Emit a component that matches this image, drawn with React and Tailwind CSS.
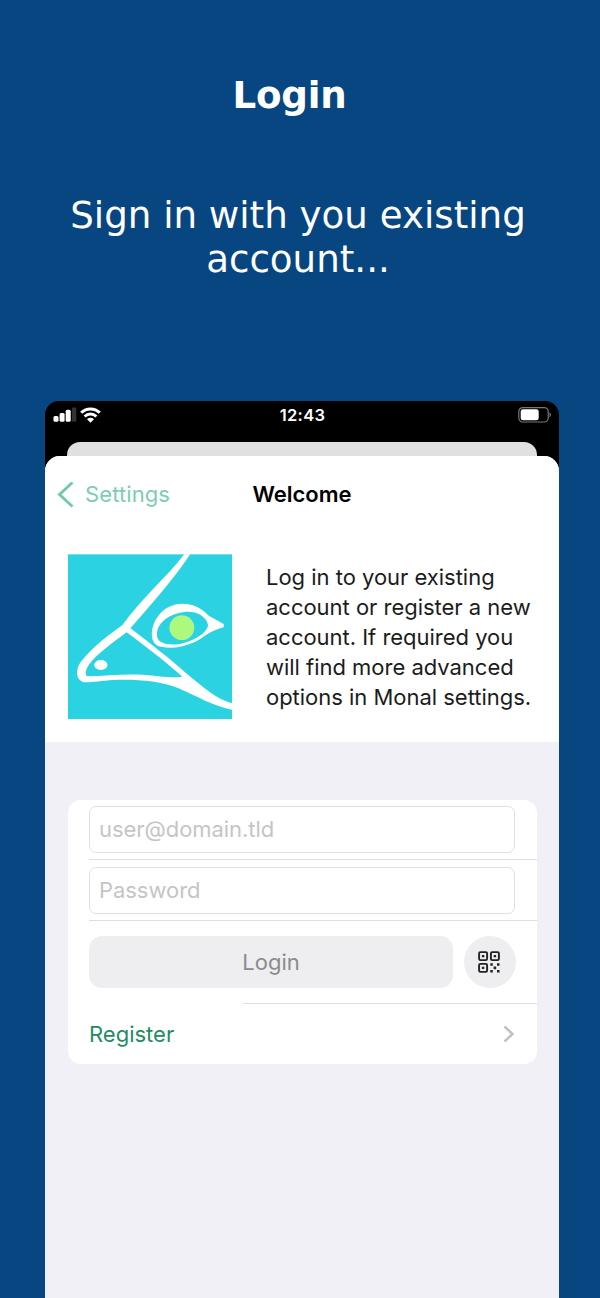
function BirdLogo() {
  return (
    <svg className="block h-[165px] w-[164px] shrink-0" viewBox="24 27 494 495" preserveAspectRatio="none">
      <rect x="24" y="28" width="494" height="494" fill="#2bd2e2" />
      <path
        fill="#fff"
        fillRule="evenodd"
        d="M374 28H392C350 92 290 162 212 250C260 286 330 340 380 385C430 426 470 462 518 475V494C460 484 410 452 357 430C300 406 220 402 160 405C125 407 92 413 72 412C46 405 46 372 64 349C103 300 148 270 188 240C246 160 320 98 374 28ZM200 262C164 290 109 328 88 358C77 374 74 388 82 394C140 392 190 386 250 389C300 393 335 400 368 395C330 360 250 298 200 262Z"
      />
      <ellipse cx="123" cy="360" rx="20" ry="15" fill="#fff" />
      <path
        fill="#fff"
        fillRule="evenodd"
        d="M277 275C274 235 300 190 350 178C395 171 425 188 448 212L493 237V247C450 258 432 278 408 290C370 307 330 313 297 304C285 298 278 288 277 275ZM292 264C288 296 325 302 360 297C402 289 443 265 446 240C439 211 408 198 374 201C330 207 296 230 292 264Z"
      />
      <ellipse cx="367" cy="248" rx="37.500" ry="37" fill="#adf97d" />
    </svg>
  );
}

function SignalIcon() {
  return (
    <svg className="h-[15px] w-[24px]" viewBox="0 0 24 15">
      <rect x="0.500" y="9" width="5" height="5.700" rx="1.500" fill="#fff" />
      <rect x="6.600" y="6" width="5" height="8.700" rx="1.500" fill="#fff" />
      <rect x="12.700" y="2.700" width="5" height="12" rx="1.500" fill="#fff" />
      <rect x="19" y="0.500" width="4.300" height="14.200" rx="1.300" fill="#333" />
    </svg>
  );
}

function WifiIcon() {
  return (
    <svg className="ml-[3px] h-[16px] w-[21px]" viewBox="0 0 21 16" fill="none" stroke="#fff" strokeWidth="3">
      <path d="M1.200 5.700C6.500 0.600 14.500 0.600 19.800 5.700" />
      <path d="M4.600 9.500C8 6.300 13 6.300 16.400 9.500" />
      <path d="M7 12.200Q10.500 9.500 14 12.200L10.500 15.700Z" fill="#fff" stroke="none" />
    </svg>
  );
}

function BatteryIcon() {
  return (
    <svg className="h-[16px] w-[34px]" viewBox="0 0 34 16">
      <rect x="0.800" y="0.600" width="29.400" height="14.400" rx="4" fill="none" stroke="#777" strokeWidth="1.200" />
      <rect x="2.700" y="2.300" width="18" height="11" rx="2.300" fill="#fff" />
      <path d="M31.500 5.300Q33 6 33 7.800T31.500 10.300Z" fill="#777" />
    </svg>
  );
}

function QrIcon() {
  return (
    <svg className="h-[22px] w-[22px]" viewBox="0 0 22 22" fill="#222">
      <g fill="none" stroke="#222" strokeWidth="1.900">
        <rect x="1.100" y="1.100" width="8" height="8" rx="1.300" />
        <rect x="12.900" y="1.100" width="8" height="8" rx="1.300" />
        <rect x="1.100" y="12.900" width="8" height="8" rx="1.300" />
      </g>
      <path d="M3.900 3.900h2.400v2.400H3.900zM15.700 3.900h2.400v2.400h-2.400zM3.900 15.700h2.400v2.400H3.900zM12.300 12.300h2.500v2.500h-2.500zM19 12.300h2.500v2.500H19zM15.600 15.600h2.600v2.600h-2.600zM12.300 19h2.500v2.500h-2.500zM19 19h2.500v2.500H19z" />
    </svg>
  );
}

function StatusBar() {
  return (
    <div className="flex h-[28px] items-center justify-between pr-[7px] pb-px pl-2">
      <div className="flex w-[80px] items-center">
        <SignalIcon />
        <WifiIcon />
      </div>
      <span className="text-[16.500px] leading-5 font-semibold tracking-[0.3px] text-white">12:43</span>
      <div className="flex w-[80px] justify-end">
        <BatteryIcon />
      </div>
    </div>
  );
}

function Field({ placeholder, type }) {
  return (
    <input
      type={type}
      placeholder={placeholder}
      className="block h-[47px] w-[426px] rounded-[7px] border border-[#e0e0e2] bg-white px-[9px] pb-px text-[22px] tracking-[-0.05px] text-black placeholder:text-[#c5c5c7]"
    />
  );
}

export default function App() {
  return (
    <div className="flex h-[1298px] w-[600px] flex-col overflow-hidden bg-[#084682] font-['Inter','Liberation_Sans',sans-serif]">
      <header className="h-[401px] shrink-0 pt-[73px] text-center font-['DejaVu_Sans',sans-serif] text-[37.200px] leading-[44px] text-white">
        <h1 className="pr-[21px] font-bold tracking-[-0.2px]">Login</h1>
        <p className="mt-[76px] pr-1">
          Sign in with you existing
          <br />
          account...
        </p>
      </header>

      <main className="ml-[45px] flex w-[514px] grow flex-col overflow-hidden rounded-t-[14px] bg-black">
        <StatusBar />
        <div className="mx-[22px] mt-[13px] h-[14px] shrink-0 rounded-t-[13px] bg-[#e0e0e0]" />
        <div className="flex grow flex-col overflow-hidden rounded-t-[15px] bg-[#f1f0f6]">
          <section className="h-[286px] shrink-0 bg-white">
            <nav className="grid h-[77px] grid-cols-[1fr_auto_1fr] items-center">
              <a className="flex items-center pl-3 text-[22px] tracking-[0.1px] text-[#7dcdb2]">
                <svg className="mr-[11px] h-[26px] w-[17px]" viewBox="0 0 17 26" fill="none" stroke="#72c9ae" strokeWidth="2.900">
                  <path d="M15.500 0.500L2.500 12.500L15.500 24.500" />
                </svg>
                Settings
              </a>
              <h2 className="text-[22px] font-semibold text-black">Welcome</h2>
            </nav>
            <div className="flex pt-[21px] pl-[23px]">
              <BirdLogo />
              <p className="mt-2 ml-[34px] text-[22px] leading-[30.100px] tracking-[-0.02px] whitespace-nowrap text-[#1c1c1c]">
                Log in to your existing
                <br />
                account or register a new
                <br />
                account. If required you
                <br />
                will find more advanced
                <br />
                options in Monal settings.
              </p>
            </div>
          </section>

          <form className="mx-[22px] mt-[58px] ml-[23px] h-[264px] w-[469px] rounded-[13px] bg-white pl-[21px]">
            <div className="h-[60px] border-b border-[#dfdfe1] pt-[6px]">
              <Field placeholder="user@domain.tld" type="text" />
            </div>
            <div className="h-[61px] border-b border-[#dfdfe1] pt-[7px]">
              <Field placeholder="Password" type="password" />
            </div>
            <div className="flex h-[82px] items-center gap-[11px]">
              <button type="button" className="h-[52px] w-[364px] rounded-[13px] bg-[#eeeef0] text-[22px] text-[#8b8b8e]">
                Login
              </button>
              <button type="button" className="flex size-[52px] items-center justify-center rounded-full bg-[#eeeef0] pr-[2px]">
                <QrIcon />
              </button>
            </div>
            <div className="ml-[154px] h-px bg-[#dfdfe1]" />
            <div className="flex h-[60px] items-center justify-between pr-[22px] text-[22px] text-[#238c64]">
              <span>Register</span>
              <svg className="h-[18px] w-[12px]" viewBox="0 0 12 18" fill="none" stroke="#c1c1c4" strokeWidth="2.500">
                <path d="M1.500 1.500L9.500 9L1.500 16.500" />
              </svg>
            </div>
          </form>
        </div>
      </main>
    </div>
  );
}
